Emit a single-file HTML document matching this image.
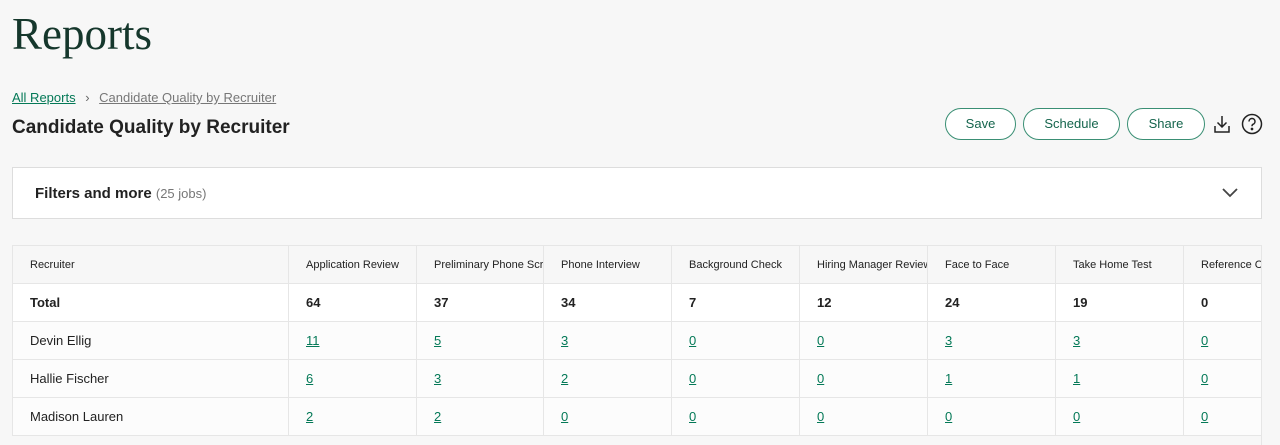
<!DOCTYPE html>
<html><head><style>
body{margin:0;width:1280px;height:439px;overflow:hidden;background:#f7f7f7;font-family:"Liberation Sans",sans-serif;color:#222;position:relative}
.h1{position:absolute;left:12px;top:8px;font-family:"Liberation Serif",serif;font-size:45px;color:#15372c}
.bc{position:absolute;left:12px;top:90px;font-size:13px}
.bc a{color:#047957;text-decoration:underline}
.bc span.g{color:#777;text-decoration:underline}
.t2{position:absolute;left:12px;top:117px;font-size:19px;font-weight:bold;color:#222}
.btn{position:absolute;top:108px;height:32px;border:1px solid #3a8f74;border-radius:16px;box-sizing:border-box;color:#15654d;font-size:13px;text-align:center;line-height:30px;background:#fff}
.filt{position:absolute;left:12px;top:167px;width:1250px;height:52px;background:#fff;border:1px solid #ddd;box-sizing:border-box}
.filt b{position:absolute;left:22px;top:17px;font-size:15px}
.filt span{color:#777;font-size:13px;font-weight:normal}
.wrap{position:absolute;left:12px;top:245px;width:1250px;height:200px;overflow:hidden;border-right:1px solid #e6e6e6;box-sizing:border-box}
table{border-collapse:collapse;table-layout:fixed;width:1300px;font-size:13px}
td{border:1px solid #e6e6e6;padding:0 0 0 17px;white-space:nowrap;overflow:hidden;height:37px}
tr.hd td{background:#f7f7f7;font-size:11px;height:37px;padding-left:17px}
tr.tot td{background:#fff;font-weight:bold;height:37px}
tr.r td{background:#fcfcfc;height:37px}
tr.r td a{color:#047957;text-decoration:underline}
</style></head><body>
<div class="h1">Reports</div>
<div class="bc"><a>All Reports</a> <span style="color:#666;margin:0 6px">›</span> <span class="g">Candidate Quality by Recruiter</span></div>
<div class="t2">Candidate Quality by Recruiter</div>
<div class="btn" style="left:945px;width:71px">Save</div>
<div class="btn" style="left:1023px;width:97px">Schedule</div>
<div class="btn" style="left:1127px;width:78px">Share</div>
<svg style="position:absolute;left:1213px;top:114px" width="18" height="20" viewBox="0 0 18 20" fill="none" stroke="#222" stroke-width="1.5"><path d="M9 2v11M4.5 8.5L9 13l4.5-4.5M2 12v6h14v-6"/></svg>
<svg style="position:absolute;left:1241px;top:113px" width="22" height="22" viewBox="0 0 22 22" fill="none" stroke="#222" stroke-width="1.5"><circle cx="11" cy="11" r="9.5"/><path d="M8 8.5a3 3 0 1 1 4 2.8c-.8.4-1 1-1 1.9"/><circle cx="11" cy="16" r=".6" fill="#222"/></svg>
<div class="filt"><b>Filters and more <span>(25 jobs)</span></b>
<svg style="position:absolute;right:22px;top:18px" width="18" height="12" viewBox="0 0 18 12" fill="none" stroke="#444" stroke-width="1.8"><path d="M2 3l7 7 7-7"/></svg></div>
<div class="wrap">
<table>
<colgroup><col style="width:276px"><col style="width:128px"><col style="width:127px"><col style="width:128px"><col style="width:128px"><col style="width:128px"><col style="width:128px"><col style="width:128px"><col style="width:128px"></colgroup>
<tr class="hd"><td>Recruiter</td><td>Application Review</td><td>Preliminary Phone Screen</td><td>Phone Interview</td><td>Background Check</td><td>Hiring Manager Review</td><td>Face to Face</td><td>Take Home Test</td><td>Reference Check</td></tr>
<tr class="tot"><td>Total</td><td>64</td><td>37</td><td>34</td><td>7</td><td>12</td><td>24</td><td>19</td><td>0</td></tr>
<tr class="r"><td>Devin Ellig</td><td><a>11</a></td><td><a>5</a></td><td><a>3</a></td><td><a>0</a></td><td><a>0</a></td><td><a>3</a></td><td><a>3</a></td><td><a>0</a></td></tr>
<tr class="r"><td>Hallie Fischer</td><td><a>6</a></td><td><a>3</a></td><td><a>2</a></td><td><a>0</a></td><td><a>0</a></td><td><a>1</a></td><td><a>1</a></td><td><a>0</a></td></tr>
<tr class="r"><td>Madison Lauren</td><td><a>2</a></td><td><a>2</a></td><td><a>0</a></td><td><a>0</a></td><td><a>0</a></td><td><a>0</a></td><td><a>0</a></td><td><a>0</a></td></tr>
</table>
</div>
</body></html>
